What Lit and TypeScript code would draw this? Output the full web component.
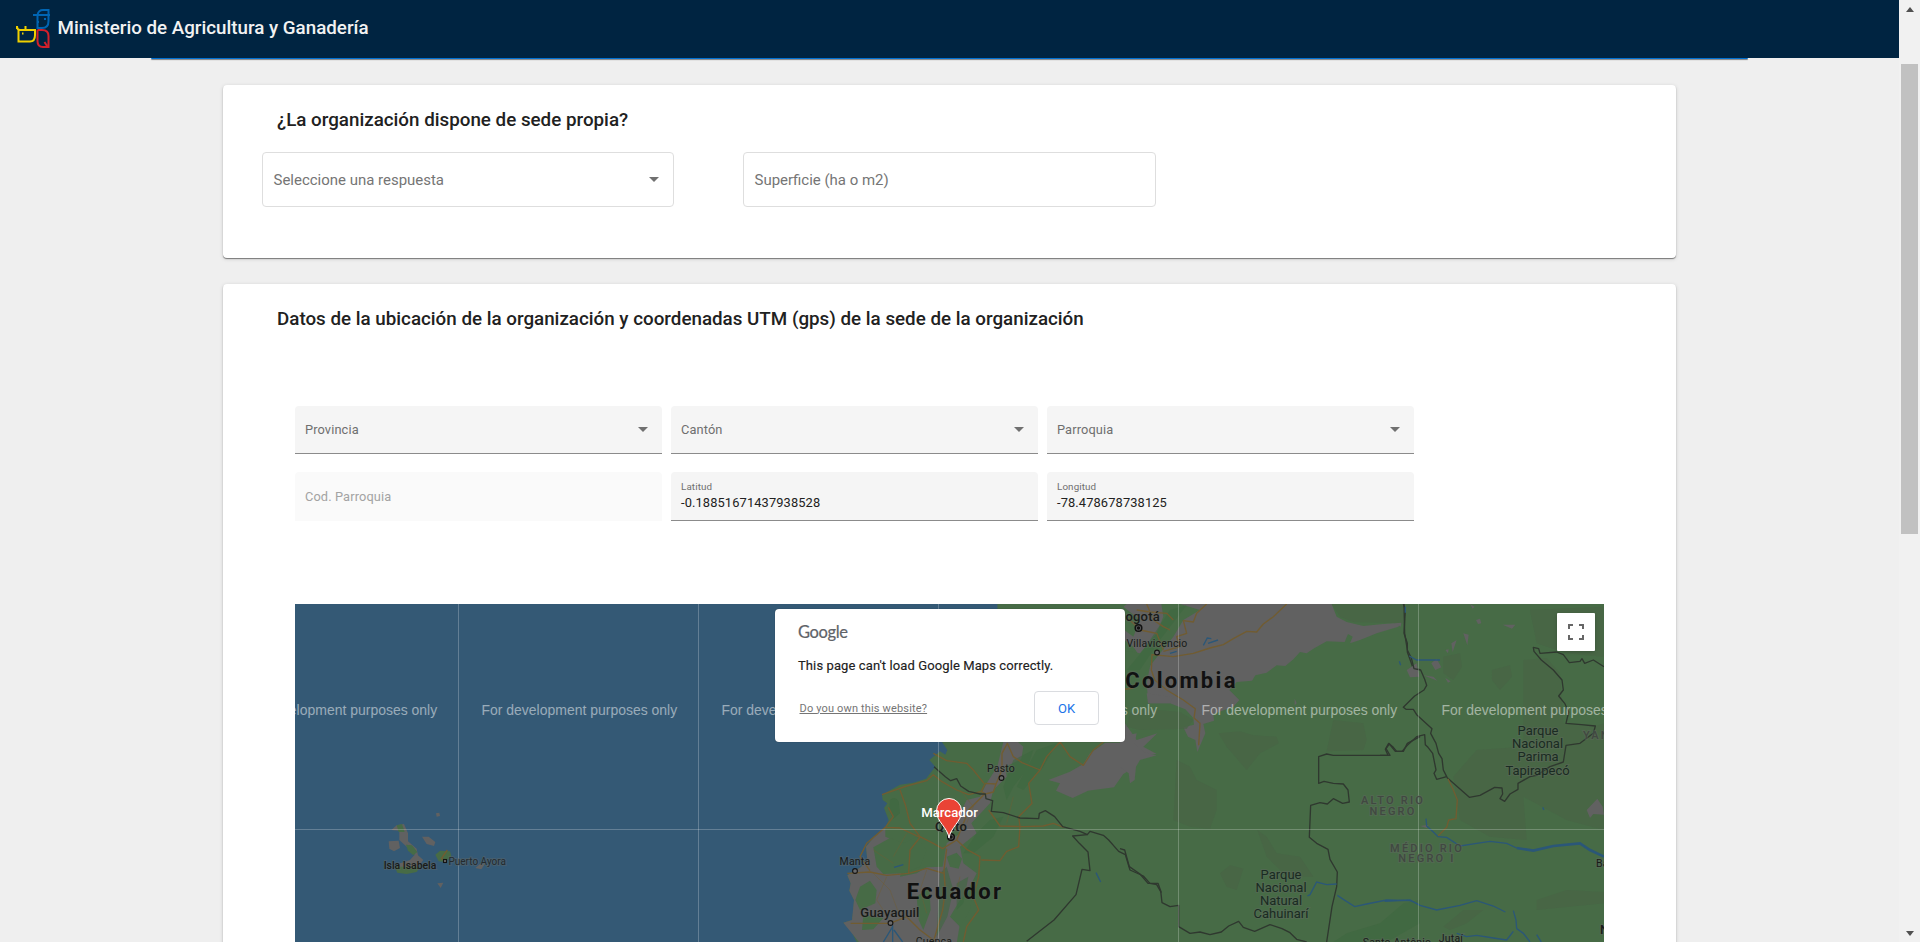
import { LitElement, html, svg, css } from "lit";
import { customElement, property } from "lit/decorators.js";

@customElement("filled-field")
class FilledField extends LitElement {
  @property() label = "";
  @property() value = "";
  @property({ type: Boolean }) select = false;
  @property({ type: Boolean }) disabled = false;

  static styles = css`
    :host { display: block; }
    .box {
      box-sizing: border-box;
      height: 48px;
      padding: 0 14px 0 10px;
      display: flex;
      align-items: center;
      justify-content: space-between;
      background: #f5f5f5;
      border-bottom: 1px solid #8b8b8b;
      border-radius: 4px 4px 0 0;
      color: #6f6f6f;
      font-size: 12.8px;
      letter-spacing: 0.12px;
    }
    .tall { height: 49px; }
    .disabled { background: #fafafa; color: #a3a3a3; border-bottom-color: #fafafa; }
    .stack { display: flex; flex-direction: column; }
    .small { font-size: 9.8px; line-height: 14px; }
    .value { color: #212121; line-height: 18px; font-size: 12.85px; }
    .arrow { border: 5px solid transparent; border-top-color: #707070; border-bottom: 0; }
  `;

  render() {
    return html`<div class="box ${this.select ? "" : "tall"} ${this.disabled ? "disabled" : ""}">
      ${this.value
        ? html`<div class="stack"><span class="small">${this.label}</span><span class="value">${this.value}</span></div>`
        : html`<span>${this.label}</span>`}
      ${this.select ? html`<span class="arrow"></span>` : ""}
    </div>`;
  }
}

const town = (x: number, y: number) => svg`<circle class="town" cx=${x} cy=${y} r="2.4"></circle>`;
const capital = (x: number, y: number) => svg`<circle class="ring" cx=${x} cy=${y} r="3.3"></circle><circle class="dot" cx=${x} cy=${y} r="1.7"></circle>`;
const label = (cls: string, x: number, y: number, text: string) =>
  svg`<text class="lbl ${cls}" x=${x} y=${y}>${text}</text>`;

@customElement("region-map")
class RegionMap extends LitElement {
  static styles = css`
    :host { display: block; position: relative; height: 338px; overflow: hidden; }
    svg.map { display: block; width: 1309px; height: 338px; background: #345975; }
    .land { fill: #476b46; }
    .gray { fill: #616161; }
    .shade { fill: #486446; opacity: 0.75; }
    .hill { fill: #3e6840; opacity: 0.6; }
    .road { fill: none; stroke: #715c31; stroke-width: 4; stroke-linejoin: round; }
    .thin { stroke-width: 2; opacity: 0.65; }
    .river { fill: none; stroke: #2b5778; stroke-width: 4; }
    .wide { stroke-width: 8; }
    .border { fill: none; stroke: #2f382f; stroke-width: 4; stroke-linejoin: round; }
    .grid { stroke: rgba(255, 255, 255, 0.23); stroke-width: 1; }
    .mark { font: 13.98px "Liberation Sans", Arial, sans-serif; fill: rgba(255, 255, 255, 0.5); }
    .town { fill: #6a6a6a; stroke: #141414; stroke-width: 1.1; }
    .ring { fill: #5b5b5b; stroke: #111; stroke-width: 1.5; }
    .dot { fill: #111; }
    .lbl {
      font-family: Roboto, sans-serif;
      fill: #191b19;
      stroke: rgba(100, 104, 100, 0.4);
      stroke-width: 2px;
      paint-order: stroke;
      text-anchor: middle;
    }
    .s { font-size: 10.5px; letter-spacing: 0.2px; }
    .m { font-size: 13px; font-weight: 500; letter-spacing: 0.2px; }
    .isle { font-size: 10.4px; font-weight: 500; }
    .islet { font-size: 10px; fill: #242b2e; }
    .start { text-anchor: start; }
    .park { font-size: 13px; fill: #1a2b22; }
    .country { font-size: 22px; font-weight: 700; letter-spacing: 2.3px; fill: #111; }
    .region { font-size: 11px; font-weight: 500; letter-spacing: 2.2px; fill: #414841; }
    .pinlabel { font: 500 13.2px Roboto, sans-serif; fill: #fff; text-anchor: middle; }
    .popup {
      position: absolute;
      left: 479.5px;
      top: 5px;
      width: 350.5px;
      height: 133px;
      box-sizing: border-box;
      padding: 14px 26px 16px 23.5px;
      background: #fff;
      border-radius: 4px;
      box-shadow: 0 0 1px rgba(0, 0, 0, 0.5);
      display: flex;
      flex-direction: column;
    }
    .brand { font: 400 16.5px/19px Lato, sans-serif; letter-spacing: -0.35px; color: #5f6368; -webkit-text-stroke: 0.2px #5f6368; }
    .msg { margin-top: 15px; font-size: 13px; line-height: 18px; letter-spacing: 0.1px; color: #212121; -webkit-text-stroke: 0.15px #212121; }
    .row { margin-top: 16px; display: flex; justify-content: space-between; align-items: center; }
    .own { font-size: 11px; margin-left: 1.5px; color: #757575; text-decoration: underline; letter-spacing: 0.16px; }
    .ok {
      box-sizing: border-box;
      width: 65px;
      height: 34px;
      border: 1px solid #dadce0;
      border-radius: 4px;
      text-align: center;
      line-height: 34px;
      font-size: 13px;
      color: #1a73e8;
    }
    .full {
      position: absolute;
      right: 9px;
      top: 9px;
      width: 38px;
      height: 38px;
      display: grid;
      place-items: center;
      background: #fff;
      border-radius: 1px;
      box-shadow: 0 1px 4px -1px rgba(0, 0, 0, 0.3);
    }
  `;

  render() {
    return html`
      <svg class="map" viewBox="295 604 1309 338">
        <g transform="translate(760 590) scale(0.33333)">
          <path class="land" d="M712 42L720 300 600 440 546 456 562 480 556 494 540 484 530 492 508 510 526 530 512 548 498 566 460 578 420 584 366 614 368 630 382 640 372 654 386 690 376 712 340 744 318 770 322 810 302 832 262 856 272 880 268 902 282 930 280 960 276 990 250 998 272 1020 292 1060H2532V42Z"></path>
          <path class="gray" d="M376 712L340 744 318 770 322 810 302 832 262 856 272 880 268 902 282 930 276 990 250 998 300 1060H590L600 1000 620 960 624 900 650 850 610 820 600 770 650 730 634 700 690 640 700 600 740 560 736 530 784 508 790 470 774 456H730L712 530 680 580 660 620 620 630 590 690 600 730 560 760 548 830 500 832 470 850 420 860 440 790 386 800 400 750 376 740Z"></path>
          <path class="land" d="M340 772L390 744 430 760 470 740 500 780 480 830 430 850 370 852 350 830ZM300 890L330 872 350 900 346 940 300 960 286 930ZM310 975L370 984 340 1018 306 1020ZM560 800L590 788 606 806 596 836 570 830ZM470 920L508 890 512 960 490 1020 476 990ZM570 980L600 930 640 890 630 960 600 1010Z"></path>
          <path class="hill" d="M390 630Q404 616 416 634L420 670 400 686 388 662ZM760 510L820 480 800 540 760 590 740 630 730 590ZM690 690L730 680 700 740 640 790 610 790 650 730ZM830 480L890 460 850 530 790 600 770 590ZM540 850L560 830 580 900 562 980 530 1040ZM590 880L625 860 610 940 590 960Z"></path>
          <path class="gray" d="M1036 458L990 490 970 522 930 545 865 570 900 580 888 602 938 624 984 602 1062 592 1090 552 1100 546 1110 500 1140 492 1190 492 1150 470 1192 430 1130 450 1095 400V458Z"></path>
          <path class="road" d="M366 614L440 588 500 572 520 554 546 575 590 600 626 614 664 604 676 580 708 582 700 606 676 612 664 604M420 600L436 644 450 700 480 740 520 760 548 776 590 750 606 710 626 660 676 610M385 652L400 680 376 712 420 714 480 742 450 780 446 850M560 776L552 840 556 900 548 960 520 1056M590 750L620 778 660 800 656 860 640 920 656 960 620 1010 610 1056M664 810L720 812 740 784 776 770 780 710 776 680 816 640 806 580 840 540 860 500 900 456M708 582L726 540 726 490 742 460 760 500 786 518 840 540M686 660L720 708 790 710 850 708 880 700 912 712M262 850L330 846 380 856 446 850 500 835 552 850 556 900M272 1000L330 1000 390 1000 440 980 480 1020 520 1050M330 842L300 800 320 760 376 712M520 490L560 512 620 520 640 540 672 580M900 456L930 500 970 526 1000 480 1030 456"></path>
          <path class="road thin" d="M340 850L390 900 420 980M500 840L480 900 500 970M440 730L400 800M340 780L400 820M600 860L590 900 606 930M380 860L350 930 390 990M600 600L640 650 620 700M760 620L740 700"></path>
          <path class="border" d="M522 530L556 560 572 572 590 566 602 588 626 604 660 612 676 612 678 626 698 632 694 664 730 668 780 684 836 686 838 670 856 662 884 680 908 710 960 724 982 734 990 724 1030 736 1046 750 1076 784 1096 794 1110 840 1150 858 1170 880 1190 884 1204 908"></path>
          <path class="border" d="M982 734L938 738 958 760 984 786 990 842 966 838 948 914 882 990 800 1054"></path>
          <path class="river" d="M402 832L430 824M398 1056L398 1006M398 1010L370 1056M402 1020L428 1056M1008 848L1022 876"></path>
        </g>
        <g transform="translate(1120 590) scale(0.33333)">
          <path class="gray" d="M20 42H635L650 80 680 96 730 108 790 102 845 98 835 110 770 130 720 150 690 160 698 140 684 132 674 156 620 154 580 176 560 190 540 186 520 208 496 228 470 226 440 248 406 256 396 272 350 276 328 300 358 330 340 350 280 372 282 392 250 402 256 430 232 486 226 450 204 440 190 412 222 404 220 384 196 358 150 340H85L80 280 96 200 60 200 40 170 0 140V60Z"></path>
          <path class="land" d="M124 42L180 42 240 60 190 90 160 140 80 240 60 290 0 300V180L60 190 110 130 130 80ZM0 42L60 90 40 140 0 110Z"></path>
          <path class="hill" d="M150 60L200 46 120 150 60 240 20 240 70 180 110 120Z"></path>
          <path class="gray" d="M0 440L50 430 44 460 70 486 110 496 60 510 48 530 44 570 30 580 26 550 0 530ZM80 310L160 322 150 340 84 340ZM524 326L530 340 524 346Z"></path>
          <path class="shade" d="M635 42H850V100L790 98 700 96 660 80Z"></path>
          <path class="shade" d="M90 358L180 366 220 390 200 416 60 420 20 410 30 370ZM296 430L360 424 400 436 470 440 476 460 420 490 380 540 320 470ZM170 510L210 530 230 570 290 600 290 660 270 716 210 710 160 690ZM640 390L730 400 740 450 730 480 620 484ZM412 720L440 740 470 790 540 800 580 860 500 860 440 800ZM300 850L330 826 370 836 350 900 320 890Z"></path>
          <path class="road" d="M500 42L460 80 430 102 410 126 380 124 340 146 310 164 270 174 220 190 160 200 96 194 94 240 104 270 140 300 190 330 226 356 222 384 240 400 236 466M20 80L60 120 110 130 130 180M260 42L230 70 220 96 190 92 200 130 170 140 180 170 130 184M80 42L100 90 130 110 150 120M50 60L90 66 140 70 160 90M0 300L40 294"></path>
          <path class="river" d="M250 166L262 144 274 146M264 160L294 150M150 190L170 184"></path>
          <path class="border" d="M0 776L14 780 28 830 60 852 84 880 114 880 122 902 126 938 150 950 176 946 176 1010 210 1030 240 1026 270 1034 304 1026 326 1008 356 994 370 1012 404 1024 450 1004 486 1016 510 1028 530 1048 560 1056"></path>
          <path class="border" d="M850 42L856 60 852 130 862 160 862 186 880 236 898 238M804 496H640L620 492 596 500V580L612 574 640 580 670 582 684 600 688 636 668 640 640 626 622 642 600 638 572 646 568 742 590 760 624 778 630 808 652 846 650 890 636 950 620 1056M804 496L796 478 806 460 820 472 830 484 850 484 862 460 900 440"></path>
          <path class="river" d="M562 918L570 914 590 876 620 884 650 882M652 916L670 928 704 950 740 942 800 930 870 932 898 944"></path>
          <path class="hill" d="M680 1030L780 1000 850 940 900 930V1000L800 1056H640Z"></path>
        </g>
        <g transform="translate(1380 590) scale(0.33333)">
          <path class="shade" d="M190 200L240 190 246 230 220 270 190 250ZM336 240L390 226 396 260 360 300 336 270ZM430 210L500 204 540 250 550 400 640 410 672 400V720L560 690 430 620 440 750 330 740 240 690 220 560 290 480 430 470ZM470 930L560 900 672 906V940L470 960ZM190 1010L250 960 310 960 260 1000 210 1020ZM450 60L670 50V200L560 190 470 160Z"></path>
          <path class="gray" d="M80 240L110 220 118 260 90 262ZM154 220L170 206 184 232 166 240ZM250 130L266 134 262 166ZM214 160L230 150 218 186ZM368 104L406 104 396 116ZM288 90L300 86 304 100 294 102ZM270 42L284 50 278 56ZM130 256L160 260 172 272ZM620 660L652 626 668 650 672 674 640 672 630 684ZM120 708L146 704 140 714ZM196 180L206 178 204 190ZM48 100L64 98 62 110ZM196 264L212 274 204 278Z"></path>
          <path class="border" d="M72 42L74 130 82 180 94 204 102 236 122 240 134 268 140 286 132 300 104 318 70 352 78 358 100 358 110 374 156 416 152 430 168 460 176 490 186 506 190 540 200 560 170 568 162 550 168 540 158 490 144 472 136 464 134 434 110 440 82 466 66 484 46 484 28 462 18 476 30 496H0"></path>
          <path class="border" d="M200 562L268 622 300 616 344 592 366 594 368 612 360 626 374 634 390 612 414 598 414 580 450 560 470 556 510 530 550 516 558 466 600 460 640 430 646 408 604 404 558 400 566 366 554 340 536 318 550 300 546 270 520 240 484 210 462 184 460 172 476 176 480 190 530 186 550 194 568 218 600 214 606 206 614 220 640 210 672 230"></path>
          <path class="road" d="M204 566L220 600 232 630 228 686 206 690 200 712 174 738"></path>
          <path class="river" d="M88 198L110 210 180 210M58 214L62 226M138 686L140 708 160 726 174 740 200 742 240 768 290 760 330 754 380 760 410 774"></path>
          <path class="river wide" d="M410 774L460 782 520 768 600 760 630 780 672 800"></path>
          <path class="river" d="M14 934L90 930 120 946 170 960 240 946 290 932 340 948 376 966M400 962L408 990 410 1016 430 1030 450 1056M230 1030L260 1040 290 1036 340 1044 380 1050 400 1024M470 1034L484 1056M76 50V68M488 652L492 660"></path>
        </g>
        <g transform="translate(280 590) scale(0.33333)">
          <path class="gray" d="M334 720L350 706 372 702 384 730 384 754 410 776 414 796 430 810 410 836 350 836 360 820 390 810 404 794 380 770 358 750 358 722ZM326 754L356 752 360 774 342 784 328 776ZM426 740L446 740 466 756 462 768 440 762ZM468 670L478 668 480 678 470 680ZM472 880L490 878 482 894ZM586 834L600 822 616 820 604 838Z"></path>
          <path class="land" d="M350 706L366 702 374 726 356 726ZM378 764L396 766 412 786 400 796 384 782ZM466 794L480 782 510 784 514 798 496 816 476 814ZM344 830L420 830 410 846 380 852 352 848Z"></path>
          <path class="road" d="M502 780L484 806 500 812"></path>
        </g>
        ${[458.5, 698.5, 938.5, 1178.5, 1418.5].map((x) => svg`<line class="grid" x1=${x} x2=${x} y1="604" y2="942"></line>`)}
        <line class="grid" x1="295" x2="1604" y1="829.5" y2="829.5"></line>
        ${[241.5, 481.5, 721.5, 961.5, 1201.5, 1441.5].map((x) => svg`<text class="mark" x=${x} y="714.5">For development purposes only</text>`)}
        ${label("isle", 410, 869, "Isla Isabela")}
        ${label("islet start", 448.5, 865, "Puerto Ayora")}
        <rect class="town" x="443.5" y="859.5" width="3" height="3"></rect>
        ${label("m", 1138.5, 621, "Bogotá")}
        ${capital(1138.5, 628)}
        ${label("s", 1157, 646.5, "Villavicencio")}${town(1157, 652.5)}
        ${label("country", 1181.5, 688, "Colombia")}
        ${label("s", 1001, 772, "Pasto")}${town(1001.5, 778)}
        ${label("m", 951, 831, "Quito")}
        ${capital(951, 837)}
        ${label("s", 855, 865, "Manta")}${town(855, 871)}
        ${label("country", 955, 899, "Ecuador")}
        ${label("m", 890, 917, "Guayaquil")}${town(890.5, 923)}
        ${label("s", 934, 945, "Cuenca")}
        ${label("park", 1281, 878.5, "Parque")}
        ${label("park", 1281, 891.5, "Nacional")}
        ${label("park", 1281, 904.5, "Natural")}
        ${label("park", 1281, 917.5, "Cahuinarí")}
        ${label("park", 1538, 735, "Parque")}
        ${label("park", 1537.5, 748, "Nacional")}
        ${label("park", 1538, 761, "Parima")}
        ${label("park", 1537.5, 774.5, "Tapirapecó")}
        ${label("region", 1393, 804, "ALTO RIO")}
        ${label("region", 1393, 814.5, "NEGRO")}
        ${label("region", 1427, 851.5, "MÉDIO RIO")}
        ${label("region", 1427, 862, "NEGRO I")}
        ${label("region start", 1583, 739, "YANOMAMI")}
        ${label("s start", 1596, 867, "Barcelos")}
        ${label("m start", 1600, 934, "N")}
        ${label("s", 1451, 942, "Jutaí")}
        ${label("s", 1397, 946, "Santo Antônio")}
        <path d="M949 838C947.5 827 936.5 822 936.5 811A12.5 12.5 0 0 1 961.5 811C961.5 822 950.5 827 949 838Z" fill="#ea4335" stroke="#fff" stroke-width="1"></path>
        <text class="pinlabel" x="949.5" y="817">Marcador</text>
      </svg>
      <div class="popup">
        <div class="brand">Google</div>
        <div class="msg">This page can't load Google Maps correctly.</div>
        <div class="row"><span class="own">Do you own this website?</span><div class="ok">OK</div></div>
      </div>
      <div class="full">
        <svg width="18" height="18" viewBox="0 0 18 18" fill="none" stroke="#666" stroke-width="2">
          <path d="M2 6V2H6M12 2H16V6M16 12V16H12M6 16H2V12"></path>
        </svg>
      </div>`;
  }
}

@customElement("app-root")
class AppRoot extends LitElement {
  static styles = css`
    :host {
      display: flex;
      height: 942px;
      overflow: hidden;
      background: #efefef;
      font-family: Roboto, sans-serif;
      color: #212121;
    }
    .page { width: 1899px; height: 942px; overflow: hidden; }
    .bar { height: 58px; background: #002441; display: flex; align-items: center; }
    .logo { margin-left: 16px; display: block; }
    .name { margin: -3px 0 0 6.5px; color: #f2f2f2; font-size: 18.75px; font-weight: 500; }
    .edge {
      height: 1px;
      margin: 0 151px;
      background: #0070d2;
      border-radius: 0 0 3px 3px;
      box-shadow: 0 1px 1px rgba(0, 0, 0, 0.5);
    }
    .card {
      box-sizing: border-box;
      margin: 26px 223px 0;
      background: #fff;
      border-radius: 4px;
      box-shadow: 0 1px 1px rgba(0, 0, 0, 0.45), 0 1px 4px rgba(0, 0, 0, 0.14);
    }
    .first { height: 173px; padding: 22px 39px; }
    .second { height: 700px; padding: 22px 72px; }
    .title { margin: 0; font-size: 18.79px; font-weight: 500; line-height: 26px; white-space: nowrap; }
    .first .title { padding-left: 15px; }
    .second .title { margin-left: -18px; }
    .outlined { margin-top: 19px; display: flex; gap: 69px; }
    .outline {
      box-sizing: border-box;
      width: 412px;
      height: 55px;
      padding: 0 14px 0 10.5px;
      border: 1px solid #dedede;
      border-radius: 4px;
      display: flex;
      align-items: center;
      justify-content: space-between;
      font-size: 14.97px;
      color: #757575;
    }
    .outline + .outline { width: 413px; }
    .arrow { border: 5px solid transparent; border-top-color: #707070; border-bottom: 0; }
    .fields { margin: 74px 0 83px; display: grid; grid-template-columns: repeat(3, 367px); gap: 18px 9px; }
    .scroll {
      width: 21px;
      box-sizing: border-box;
      padding: 7px 2px 6px;
      background: #f1f1f1;
      display: flex;
      flex-direction: column;
      align-items: center;
    }
    .up { border: 4.5px solid transparent; border-bottom: 5px solid #505050; border-top: 0; }
    .thumb { margin-top: 52px; width: 17px; height: 470px; background: #c1c1c1; }
    .down { margin-top: auto; border: 4.5px solid transparent; border-top: 5px solid #505050; border-bottom: 0; }
  `;

  render() {
    return html`
      <div class="page">
        <header class="bar">
          <svg class="logo" width="35" height="40" viewBox="0 0 35 40" fill="none" stroke-width="2">
            <path stroke="#0065b3" d="M17 6H34M21.5 6Q22.5 1 27 1H32.5V12Q32.5 19 26 19H21.5V6M21.5 13H23M28 10H30"></path>
            <path stroke="#f0d000" d="M1 17Q1 21 4 21H19V26Q19 32.5 14 32.5H2.5V21M1 17V20M9.5 21V17M6 24.5H7.5"></path>
            <path stroke="#d3202b" d="M21.5 21H26Q32.5 21 32.5 27V38H27Q21.5 38 21.5 32V21M28.5 33L31 37"></path>
          </svg>
          <div class="name">Ministerio de Agricultura y Ganadería</div>
        </header>
        <div class="edge"></div>
        <section class="card first">
          <h2 class="title">¿La organización dispone de sede propia?</h2>
          <div class="outlined">
            <div class="outline"><span>Seleccione una respuesta</span><span class="arrow"></span></div>
            <div class="outline"><span>Superficie (ha o m2)</span></div>
          </div>
        </section>
        <section class="card second">
          <h2 class="title">Datos de la ubicación de la organización y coordenadas UTM (gps) de la sede de la organización</h2>
          <div class="fields">
            <filled-field label="Provincia" select></filled-field>
            <filled-field label="Cantón" select></filled-field>
            <filled-field label="Parroquia" select></filled-field>
            <filled-field label="Cod. Parroquia" disabled></filled-field>
            <filled-field label="Latitud" value="-0.18851671437938528"></filled-field>
            <filled-field label="Longitud" value="-78.478678738125"></filled-field>
          </div>
          <region-map></region-map>
        </section>
      </div>
      <div class="scroll"><span class="up"></span><span class="thumb"></span><span class="down"></span></div>`;
  }
}
